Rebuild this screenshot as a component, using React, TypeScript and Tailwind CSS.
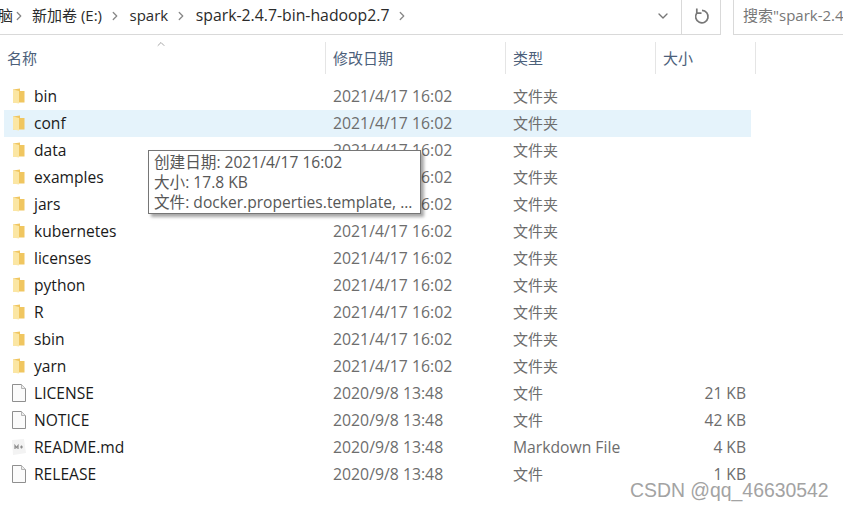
import { ChevronDown, ChevronRight } from "lucide-react"

type Row = { name: string; date: string; type: string; size?: string; icon: "folder" | "file" | "md" }

const folders = ["bin", "conf", "data", "examples", "jars", "kubernetes", "licenses", "python", "R", "sbin", "yarn"]

const rows: Row[] = [
  ...folders.map((name): Row => ({ name, date: "2021/4/17 16:02", type: "文件夹", icon: "folder" })),
  { name: "LICENSE", date: "2020/9/8 13:48", type: "文件", size: "21 KB", icon: "file" },
  { name: "NOTICE", date: "2020/9/8 13:48", type: "文件", size: "42 KB", icon: "file" },
  { name: "README.md", date: "2020/9/8 13:48", type: "Markdown File", size: "4 KB", icon: "md" },
  { name: "RELEASE", date: "2020/9/8 13:48", type: "文件", size: "1 KB", icon: "file" },
]

function FolderIcon() {
  return (
    <svg width="14" height="17" viewBox="0 0 14 17" className="shrink-0">
      <path d="M1 1.5 L8 0.5 L8 3 L12.5 3 L12.5 14.5 L1 14.5 Z" fill="#f0c660" />
      <path d="M1 1.5 L7 3 L7 15.5 L1 14.5 Z" fill="#fbe6a3" />
    </svg>
  )
}

function FileIcon() {
  return (
    <svg width="14" height="19" viewBox="0 0 14 19" className="shrink-0">
      <path d="M0.5 0.5 H9.5 L13.5 4.5 V17.5 H0.5 Z" fill="#fbfbfb" stroke="#8f8f8f" />
      <path d="M9.5 0.5 V4.5 H13.5" fill="#ececec" stroke="#b5b5b5" />
    </svg>
  )
}

function MdIcon() {
  return (
    <svg width="14" height="17" viewBox="0 0 14 17" className="shrink-0">
      <path d="M0 1 L12 0 L14 14 L1 16 Z" fill="#f3f3f3" />
      <path d="M3 10 V6.5 L4.5 8.5 L6 6.5 V10 M8 8 H11 M9.5 6.5 V9.5" fill="none" stroke="#8c8c8c" strokeWidth="1.2" />
    </svg>
  )
}

function RefreshIcon() {
  return (
    <svg width="17" height="18" viewBox="0 0 17 18" fill="none" stroke="#777777" strokeWidth="1.7">
      <path d="M9 3.4 A6.2 6.2 0 1 1 3.8 6" />
      <path d="M3.8 1.5 V6.2 H8.5" />
    </svg>
  )
}

function Crumb({ children, wide }: { children: string; wide?: boolean }) {
  return (
    <>
      <span className={`text-[#2b2b2b] whitespace-nowrap ${wide ? "text-[15.8px]" : "text-[15px]"}`}>{children}</span>
      <ChevronRight className="w-3.5 h-3.5 ml-[6px] mr-[7.5px] text-[#888888] shrink-0" strokeWidth={2.2} />
    </>
  )
}

export default function App() {
  return (
    <div className="relative w-[843px] h-[509px] overflow-hidden bg-white font-['Open_Sans','Noto_Sans_CJK_SC',sans-serif]">
      {/* address bar */}
      <div className="flex h-[35px]">
        <div className="flex items-center w-[721px] border-b border-r border-[#d9d9d9] overflow-hidden">
          <div className="w-[681px] shrink-0 flex items-center h-full pb-[3px]">
            <span className="text-[15px] text-[#2b2b2b] w-[13px] overflow-hidden whitespace-nowrap flex justify-end shrink-0">脑</span>
            <ChevronRight className="w-3.5 h-3.5 -ml-[1px] mr-[6px] text-[#888888] shrink-0" strokeWidth={2.2} />
            <Crumb>新加卷 (E:)</Crumb>
            <Crumb>spark</Crumb>
            <Crumb wide>spark-2.4.7-bin-hadoop2.7</Crumb>
            <div className="flex-1" />
            <ChevronDown className="w-4 h-4 text-[#777777] shrink-0 mr-[10px]" strokeWidth={2} />
          </div>
          <div className="flex-1 h-full border-l border-[#d9d9d9] flex items-center justify-center pb-[2px]">
            <RefreshIcon />
          </div>
        </div>
        <div className="ml-[12px] flex-1 border-l border-b border-[#d9d9d9] pl-[9px] pb-[3px] flex items-center overflow-hidden">
          <span className="text-[15px] text-[#777777] whitespace-nowrap">搜索"spark-2.4.7-bin-hadoop2.7"</span>
        </div>
      </div>

      {/* column headers */}
      <div className="flex h-[32px] mt-[7px] text-[15px] text-[#4c607a]">
        <div className="relative w-[326px] border-r border-[#e5e5e5] pl-[7px] flex items-center">
          名称
          <ChevronDown className="absolute left-[155px] -top-[4px] w-3 h-3 rotate-180 text-[#888888]" strokeWidth={1.5} />
        </div>
        <div className="w-[180px] border-r border-[#e5e5e5] pl-[7px] flex items-center">修改日期</div>
        <div className="w-[150px] border-r border-[#e5e5e5] pl-[7px] flex items-center">类型</div>
        <div className="w-[100px] border-r border-[#e5e5e5] pl-[7px] flex items-center">大小</div>
      </div>

      {/* file rows */}
      <div className="mt-[9px] ml-[4px] w-[747px]">
        {rows.map((row) => (
          <div key={row.name} className={`flex items-center h-[27px] ${row.name === "conf" ? "bg-[#e5f3fb]" : ""}`}>
            <div className="w-[322px] flex items-center pl-[8px]">
              <div className="w-[22px] flex">
                {row.icon === "folder" && <FolderIcon />}
                {row.icon === "file" && <FileIcon />}
                {row.icon === "md" && <MdIcon />}
              </div>
              <span className="text-[15.6px] text-[#1a1a1a]">{row.name}</span>
            </div>
            <div className="w-[7px]" />
            <div className="w-[180px] text-[15.8px] text-[#6d6d6d] whitespace-nowrap">{row.date}</div>
            <div className={`w-[150px] text-[#6d6d6d] whitespace-nowrap ${row.icon === "md" ? "text-[15.7px]" : "text-[15px]"}`}>{row.type}</div>
            <div className="w-[83px] text-right text-[15.6px] text-[#6d6d6d] whitespace-nowrap">{row.size}</div>
          </div>
        ))}
      </div>

      {/* tooltip */}
      <div className="absolute left-[148px] top-[150px] w-[273px] h-[64px] bg-white border border-[#767676] shadow-[3px_3px_3px_rgba(0,0,0,0.35)] pl-[5px] pt-[1px] text-[15.6px] leading-[20px] text-[#575757] whitespace-nowrap">
        <div>创建日期: 2021/4/17 16:02</div>
        <div>大小: 17.8 KB</div>
        <div>文件: docker.properties.template, ...</div>
      </div>

      {/* watermark */}
      <div className="absolute left-[630px] top-[478px] text-[19.4px] leading-[24px] text-[#a3a3a3] font-['Liberation_Sans',sans-serif] whitespace-nowrap">
        CSDN @qq_46630542
      </div>
    </div>
  )
}
